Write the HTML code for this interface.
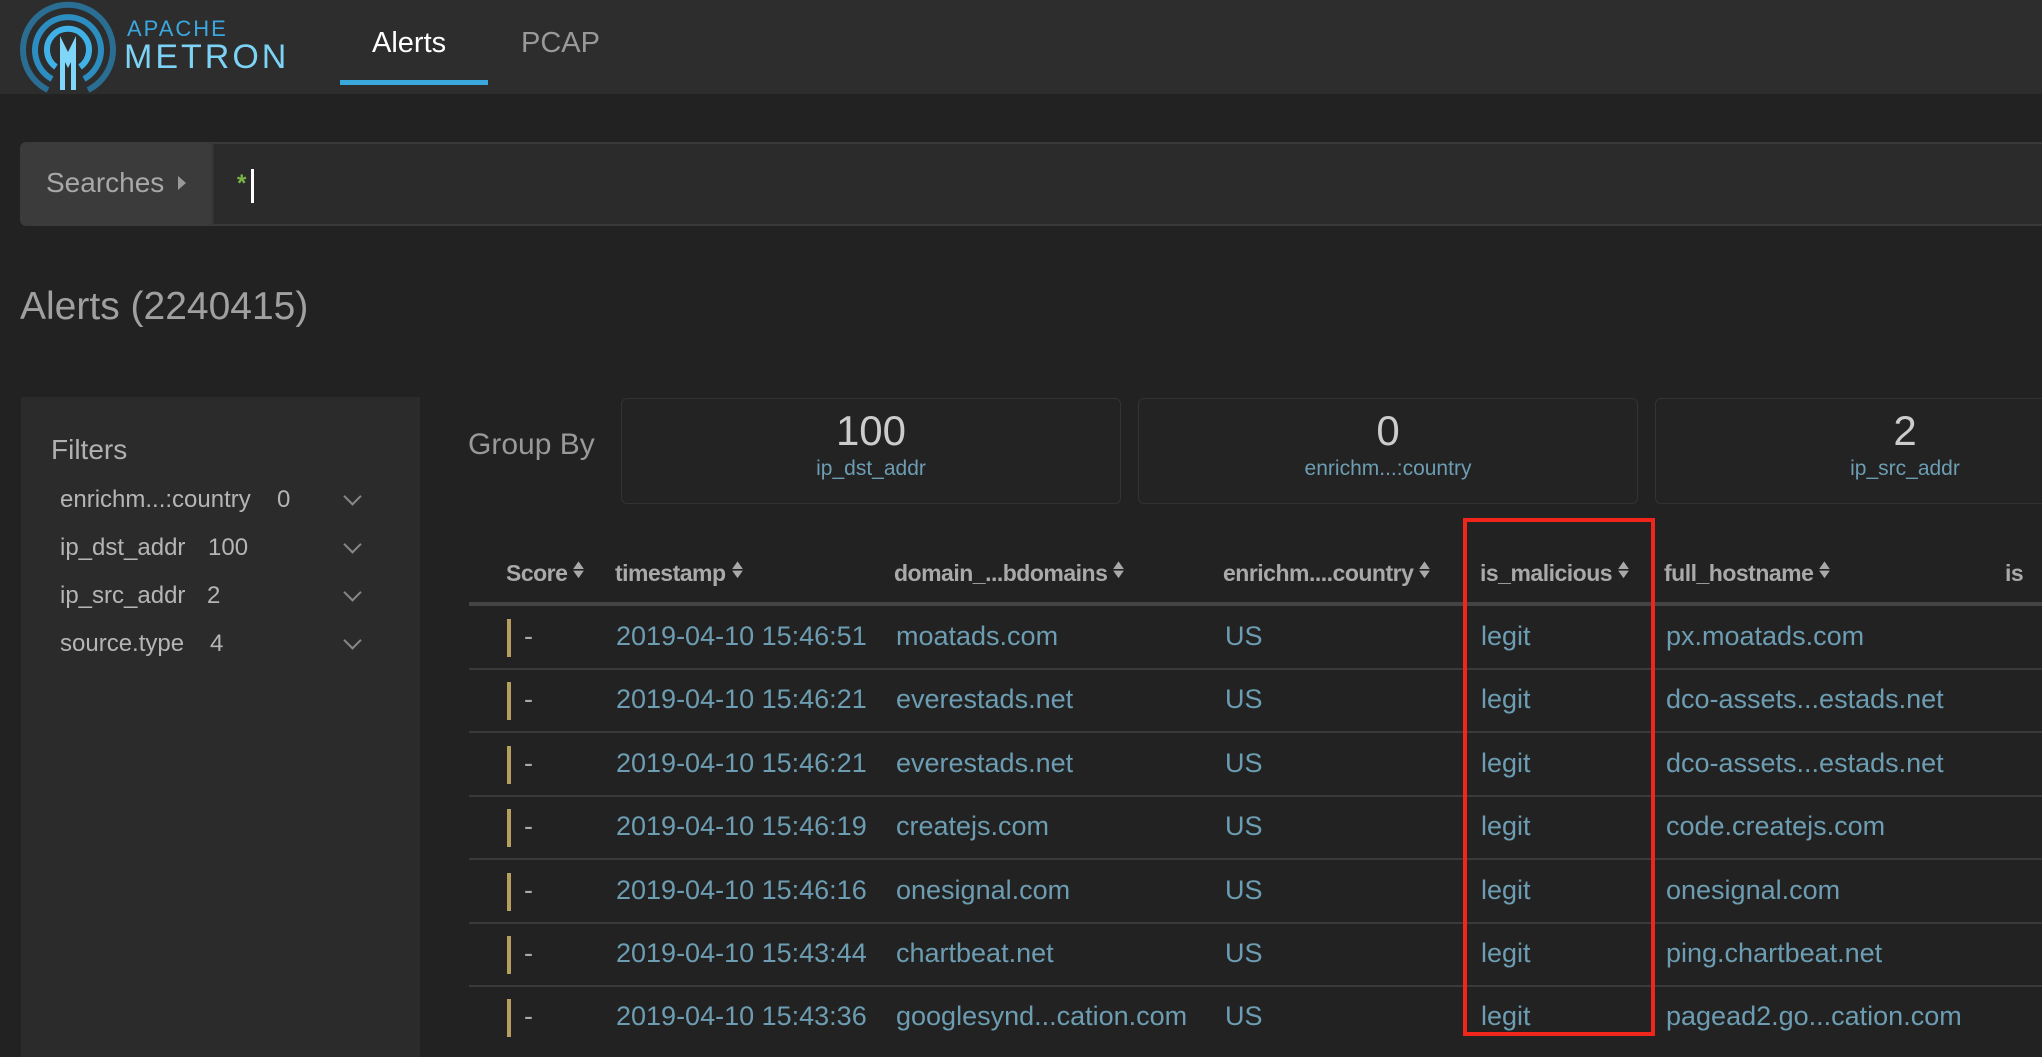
<!DOCTYPE html>
<html><head><meta charset="utf-8"><style>
*{margin:0;padding:0;box-sizing:border-box}
body{width:2042px;height:1046px;background:#222;overflow:hidden;font-family:"Liberation Sans",sans-serif;position:relative}
.a{position:absolute;white-space:nowrap}
.hdr{left:0;top:0;width:2042px;height:94px;background:#2d2d2d}
.th{font-weight:bold;color:#a9a9a9;font-size:23px;top:560px;letter-spacing:-0.5px}
.sort{display:inline-block;font-size:13px;vertical-align:3px;margin-left:5px;line-height:9px;transform:scaleX(1.4)}
.cell{font-size:27px;color:#6c9db2}
.line{left:469px;width:1573px;height:2px;background:#3a3a3a}
.card{border:1px solid #333;border-radius:6px;top:398px;height:106px;text-align:center;background:#232323}
.card .n{font-size:42px;color:#ccc;margin-top:8px}
.card .l{font-size:21px;color:#6c9db2;margin-top:2px}
.fi{font-size:24px;color:#b5b5b5;left:60px}
.chev{left:346px;width:13px;height:13px;border-right:2px solid #888;border-bottom:2px solid #888;transform:rotate(45deg)}
</style></head><body>
<div class="a hdr"></div>
<svg class="a" style="left:18px;top:0" width="100" height="94" viewBox="0 0 100 94">
<path d="M30 90 A45 45 0 1 1 70 90" fill="none" stroke="#2a6f93" stroke-width="6"/>
<path d="M34 79 A33 33 0 1 1 66 79" fill="none" stroke="#2c8dc0" stroke-width="6"/>
<path d="M38 67 A21 21 0 1 1 62 67" fill="none" stroke="#40b2e8" stroke-width="6"/>
<path d="M42 90 L42 36 L50 52 L58 36 L58 90 L53 90 L53 62 L50 68 L47 62 L47 90Z" fill="#7fd6f8"/>
</svg>
<div class="a" style="left:127px;top:16px;font-size:22px;color:#3aa8e0;letter-spacing:2px">APACHE</div>
<div class="a" style="left:124px;top:38px;font-size:34px;color:#7dd3f5;letter-spacing:3px">METRON</div>
<div class="a" style="left:372px;top:27px;font-size:29px;color:#fff">Alerts</div>
<div class="a" style="left:340px;top:80px;width:148px;height:5px;background:#3aa8dc"></div>
<div class="a" style="left:521px;top:27px;font-size:29px;color:#999">PCAP</div>

<div class="a" style="left:20px;top:142px;width:2030px;height:84px;border:2px solid #3a3a3a;border-radius:6px;background:#2b2b2b"></div>
<div class="a" style="left:21px;top:143px;width:193px;height:82px;background:#3b3b3b;border-right:2px solid #333;border-radius:5px 0 0 5px"></div>
<div class="a" style="left:46px;top:167px;font-size:28px;color:#a8a8a8">Searches</div>
<div class="a" style="left:178px;top:176px;width:0;height:0;border-top:7px solid transparent;border-bottom:7px solid transparent;border-left:8px solid #999"></div>
<div class="a" style="left:237px;top:170px;font-size:24px;color:#7ab648;font-weight:bold">*</div>
<div class="a" style="left:251px;top:169px;width:3px;height:34px;background:#fff"></div>

<div class="a" style="left:20px;top:285px;font-size:39px;color:#a0a0a0">Alerts (2240415)</div>

<div class="a" style="left:21px;top:397px;width:399px;height:660px;background:#2b2b2b"></div>
<div class="a" style="left:51px;top:434px;font-size:28px;color:#b0b0b0">Filters</div>
<div class="a fi" style="top:486px">enrichm...:country</div><div class="a fi" style="left:277px;top:486px">0</div>
<div class="a fi" style="top:534px">ip_dst_addr</div><div class="a fi" style="left:208px;top:534px">100</div>
<div class="a fi" style="top:582px">ip_src_addr</div><div class="a fi" style="left:207px;top:582px">2</div>
<div class="a fi" style="top:630px">source.type</div><div class="a fi" style="left:210px;top:630px">4</div>
<div class="a chev" style="top:490px"></div><div class="a chev" style="top:538px"></div><div class="a chev" style="top:586px"></div><div class="a chev" style="top:634px"></div>

<div class="a" style="left:468px;top:428px;font-size:30px;color:#999">Group By</div>
<div class="a card" style="left:621px;width:500px"><div class="n">100</div><div class="l">ip_dst_addr</div></div>
<div class="a card" style="left:1138px;width:500px"><div class="n">0</div><div class="l">enrichm...:country</div></div>
<div class="a card" style="left:1655px;width:500px"><div class="n">2</div><div class="l">ip_src_addr</div></div>

<div class="a th" style="left:506px">Score<span class="sort">▲<br>▼</span></div>
<div class="a th" style="left:615px">timestamp<span class="sort">▲<br>▼</span></div>
<div class="a th" style="left:894px">domain_...bdomains<span class="sort">▲<br>▼</span></div>
<div class="a th" style="left:1223px">enrichm....country<span class="sort">▲<br>▼</span></div>
<div class="a th" style="left:1480px">is_malicious<span class="sort">▲<br>▼</span></div>
<div class="a th" style="left:1664px">full_hostname<span class="sort">▲<br>▼</span></div>
<div class="a th" style="left:2005px">is</div>
<div class="a line" style="top:602px;height:4px;background:#444"></div>

<div id="rows"></div>
<script>
var d=[["2019-04-10 15:46:51","moatads.com","px.moatads.com"],["2019-04-10 15:46:21","everestads.net","dco-assets...estads.net"],["2019-04-10 15:46:21","everestads.net","dco-assets...estads.net"],["2019-04-10 15:46:19","createjs.com","code.createjs.com"],["2019-04-10 15:46:16","onesignal.com","onesignal.com"],["2019-04-10 15:43:44","chartbeat.net","ping.chartbeat.net"],["2019-04-10 15:43:36","googlesynd...cation.com","pagead2.go...cation.com"]];
var h="";
d.forEach(function(r,i){var y=606+i*63.4;var t=y+15;
h+='<div class="a" style="left:507px;top:'+(y+13)+'px;width:4px;height:38px;background:#b49f5f"></div>';
h+='<div class="a cell" style="left:524px;top:'+t+'px;color:#aaa">-</div>';
h+='<div class="a cell" style="left:616px;top:'+t+'px">'+r[0]+'</div>';
h+='<div class="a cell" style="left:896px;top:'+t+'px">'+r[1]+'</div>';
h+='<div class="a cell" style="left:1225px;top:'+t+'px">US</div>';
h+='<div class="a cell" style="left:1481px;top:'+t+'px">legit</div>';
h+='<div class="a cell" style="left:1666px;top:'+t+'px">'+r[2]+'</div>';
if(i<6)h+='<div class="a line" style="top:'+(y+62)+'px"></div>';});
document.getElementById("rows").innerHTML=h;
</script>
<div class="a" style="left:1463px;top:518px;width:192px;height:518px;border:4px solid #f0261d"></div>
</body></html>
